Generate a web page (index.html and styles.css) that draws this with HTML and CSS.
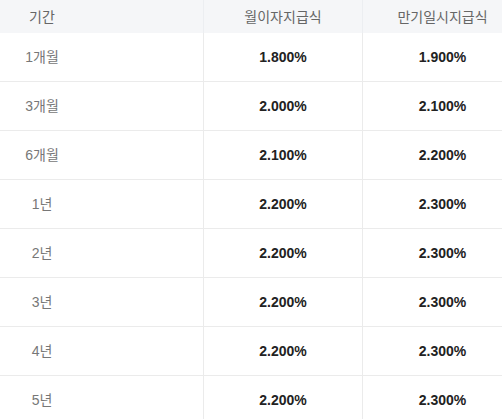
FILE: index.html
```html
<!DOCTYPE html>
<html lang="ko">
<head>
    <meta charset="UTF-8">
    <meta name="viewport" content="width=device-width, initial-scale=1.0">
    <title>금리표</title>
    <link rel="stylesheet" href="styles.css">
</head>
<body>
    <table class="rate-table">
        <colgroup>
            <col class="col-term">
            <col class="col-month">
            <col class="col-end">
        </colgroup>
        <thead>
            <tr>
                <th class="term">기간</th>
                <th>월이자지급식</th>
                <th>만기일시지급식</th>
            </tr>
        </thead>
        <tbody>
            <tr><td class="term">1개월</td><td>1.800%</td><td>1.900%</td></tr>
            <tr><td class="term">3개월</td><td>2.000%</td><td>2.100%</td></tr>
            <tr><td class="term">6개월</td><td>2.100%</td><td>2.200%</td></tr>
            <tr><td class="term">1년</td><td>2.200%</td><td>2.300%</td></tr>
            <tr><td class="term">2년</td><td>2.200%</td><td>2.300%</td></tr>
            <tr><td class="term">3년</td><td>2.200%</td><td>2.300%</td></tr>
            <tr><td class="term">4년</td><td>2.200%</td><td>2.300%</td></tr>
            <tr><td class="term">5년</td><td>2.200%</td><td>2.300%</td></tr>
        </tbody>
    </table>
</body>
</html>
```

FILE: styles.css
```css
*{
    margin: 0;
    padding: 0;
    box-sizing: border-box;
}
body{
    background-color: #fff;
    overflow: hidden;
    font-family: "Liberation Sans", "Noto Sans CJK KR", sans-serif;
}
.rate-table{
    border-collapse: separate;
    border-spacing: 0;
    table-layout: fixed;
    width: 522px;
}
.col-term{ width: 203px; }
.col-month{ width: 159px; }
.col-end{ width: 160px; }

.rate-table th{
    height: 33px;
    background-color: #f5f6f8;
    color: #666;
    font-weight: normal;
    font-size: 14px;
    line-height: 20px;
    text-align: center;
    border-left: 1px solid #eceef1;
}
.rate-table td{
    height: 49px;
    color: #222;
    font-weight: bold;
    font-size: 14px;
    line-height: 20px;
    text-align: center;
    border-bottom: 1px solid #ebebeb;
    border-left: 1px solid #ebebeb;
}
.rate-table .term{
    border-left: none;
    padding-right: 119px;
    color: #777;
    font-weight: normal;
}
.rate-table th.term{
    color: #666;
}
```
